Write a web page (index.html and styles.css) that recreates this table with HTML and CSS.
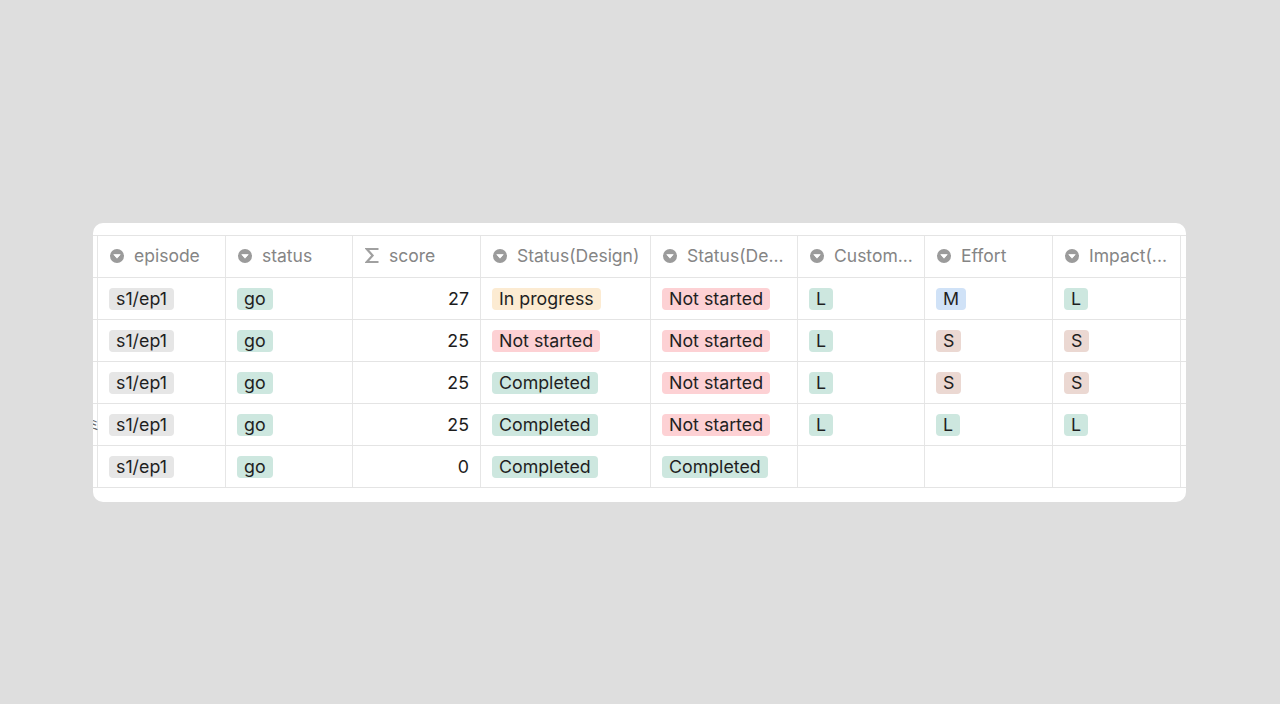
FILE: index.html
```html
<!DOCTYPE html>
<html>
<head>
<meta charset="utf-8">
<link rel="stylesheet" href="styles.css">
</head>
<body>
<div class="card">
  <div class="table">
    <div class="row head">
      <div class="cell lead"></div>
      <div class="cell"><span class="ico"><svg viewBox="0 0 14 14"><circle cx="7" cy="7" r="7" fill="#9b9b9b"/><path d="M3.8 5.6 H10.2 L7 9.2 Z" fill="#fff" stroke="#fff" stroke-width="0.8" stroke-linejoin="round"/></svg></span>episode</div>
      <div class="cell"><span class="ico"><svg viewBox="0 0 14 14"><circle cx="7" cy="7" r="7" fill="#9b9b9b"/><path d="M3.8 5.6 H10.2 L7 9.2 Z" fill="#fff" stroke="#fff" stroke-width="0.8" stroke-linejoin="round"/></svg></span>status</div>
      <div class="cell"><span class="ico sigma"><svg viewBox="0 0 14 17"><path d="M13.5 2 H1.8 L7.6 8.5 L1.8 15 H13.5" fill="none" stroke="#a0a0a0" stroke-width="2.2" stroke-linejoin="miter"/></svg></span>score</div>
      <div class="cell"><span class="ico"><svg viewBox="0 0 14 14"><circle cx="7" cy="7" r="7" fill="#9b9b9b"/><path d="M3.8 5.6 H10.2 L7 9.2 Z" fill="#fff" stroke="#fff" stroke-width="0.8" stroke-linejoin="round"/></svg></span>Status(Design)</div>
      <div class="cell"><span class="ico"><svg viewBox="0 0 14 14"><circle cx="7" cy="7" r="7" fill="#9b9b9b"/><path d="M3.8 5.6 H10.2 L7 9.2 Z" fill="#fff" stroke="#fff" stroke-width="0.8" stroke-linejoin="round"/></svg></span>Status(De...</div>
      <div class="cell"><span class="ico"><svg viewBox="0 0 14 14"><circle cx="7" cy="7" r="7" fill="#9b9b9b"/><path d="M3.8 5.6 H10.2 L7 9.2 Z" fill="#fff" stroke="#fff" stroke-width="0.8" stroke-linejoin="round"/></svg></span>Custom...</div>
      <div class="cell"><span class="ico"><svg viewBox="0 0 14 14"><circle cx="7" cy="7" r="7" fill="#9b9b9b"/><path d="M3.8 5.6 H10.2 L7 9.2 Z" fill="#fff" stroke="#fff" stroke-width="0.8" stroke-linejoin="round"/></svg></span>Effort</div>
      <div class="cell"><span class="ico"><svg viewBox="0 0 14 14"><circle cx="7" cy="7" r="7" fill="#9b9b9b"/><path d="M3.8 5.6 H10.2 L7 9.2 Z" fill="#fff" stroke="#fff" stroke-width="0.8" stroke-linejoin="round"/></svg></span>Impact(...</div>
      <div class="cell"></div>
    </div>

    <div class="row">
      <div class="cell lead"></div>
      <div class="cell"><span class="tag gray">s1/ep1</span></div>
      <div class="cell"><span class="tag green">go</span></div>
      <div class="cell num">27</div>
      <div class="cell"><span class="tag yellow">In progress</span></div>
      <div class="cell"><span class="tag pink">Not started</span></div>
      <div class="cell"><span class="tag green">L</span></div>
      <div class="cell"><span class="tag blue">M</span></div>
      <div class="cell"><span class="tag green">L</span></div>
      <div class="cell"></div>
    </div>

    <div class="row">
      <div class="cell lead"></div>
      <div class="cell"><span class="tag gray">s1/ep1</span></div>
      <div class="cell"><span class="tag green">go</span></div>
      <div class="cell num">25</div>
      <div class="cell"><span class="tag pink">Not started</span></div>
      <div class="cell"><span class="tag pink">Not started</span></div>
      <div class="cell"><span class="tag green">L</span></div>
      <div class="cell"><span class="tag brown">S</span></div>
      <div class="cell"><span class="tag brown">S</span></div>
      <div class="cell"></div>
    </div>

    <div class="row">
      <div class="cell lead"></div>
      <div class="cell"><span class="tag gray">s1/ep1</span></div>
      <div class="cell"><span class="tag green">go</span></div>
      <div class="cell num">25</div>
      <div class="cell"><span class="tag green">Completed</span></div>
      <div class="cell"><span class="tag pink">Not started</span></div>
      <div class="cell"><span class="tag green">L</span></div>
      <div class="cell"><span class="tag brown">S</span></div>
      <div class="cell"><span class="tag brown">S</span></div>
      <div class="cell"></div>
    </div>

    <div class="row">
      <div class="cell lead"><span class="handle">ミ</span></div>
      <div class="cell"><span class="tag gray">s1/ep1</span></div>
      <div class="cell"><span class="tag green">go</span></div>
      <div class="cell num">25</div>
      <div class="cell"><span class="tag green">Completed</span></div>
      <div class="cell"><span class="tag pink">Not started</span></div>
      <div class="cell"><span class="tag green">L</span></div>
      <div class="cell"><span class="tag green">L</span></div>
      <div class="cell"><span class="tag green">L</span></div>
      <div class="cell"></div>
    </div>

    <div class="row">
      <div class="cell lead"></div>
      <div class="cell"><span class="tag gray">s1/ep1</span></div>
      <div class="cell"><span class="tag green">go</span></div>
      <div class="cell num">0</div>
      <div class="cell"><span class="tag green">Completed</span></div>
      <div class="cell"><span class="tag green">Completed</span></div>
      <div class="cell"></div>
      <div class="cell"></div>
      <div class="cell"></div>
      <div class="cell"></div>
    </div>
  </div>
</div>
</body>
</html>
```

FILE: styles.css
```css
* { box-sizing: border-box; }

html, body {
  margin: 0;
  padding: 0;
  background: #dedede;
  height: 100%;
}

body {
  font-family: Inter, "Noto Sans", "Liberation Sans", sans-serif;
  padding-top: 223px;
  padding-left: 93px;
}

.card {
  width: 1093px;
  height: 279px;
  background: #ffffff;
  border-radius: 10px;
  overflow: hidden;
  padding-top: 12px;
}

.table {
  margin-left: -123px;
  width: max-content;
  border-top: 1px solid #e4e4e4;
  border-bottom: 1px solid #e4e4e4;
}

.row {
  display: grid;
  grid-template-columns: 128px 128px 127px 128px 170px 147px 127px 128px 128px 128px;
  height: 42px;
  border-bottom: 1px solid #e4e4e4;
}

.row:last-child {
  border-bottom: none;
  height: 41px;
}

.cell {
  border-right: 1px solid #e6e6e6;
  display: flex;
  align-items: center;
  padding: 0 11px;
  font-size: 17.8px;
  color: #1d1d1d;
  white-space: nowrap;
  overflow: visible;
  min-width: 0;
}

.cell.lead {
  justify-content: flex-end;
  padding-right: 0;
}

.handle {
  font-size: 13px;
  color: #666;
  margin-right: -4px;
}

.head .cell {
  color: #858585;
  font-size: 17.5px;
  padding-left: 12px;
  padding-bottom: 2px;
}

.ico {
  width: 14px;
  height: 14px;
  margin-right: 10px;
  display: inline-flex;
  align-items: center;
  justify-content: center;
}

.ico svg {
  width: 14px;
  height: 14px;
  display: block;
}

.ico.sigma svg {
  height: 17px;
}

.num {
  justify-content: flex-end;
}

.tag {
  display: inline-block;
  height: 22px;
  line-height: 22px;
  padding: 0 7px;
  border-radius: 4px;
  color: #1f1f1f;
}

.gray { background: #e6e6e6; }
.green { background: #cde7df; }
.yellow { background: #fcebd2; }
.pink { background: #fdd1d4; }
.blue { background: #d0e2f7; }
.brown { background: #ebd8d2; }
```
